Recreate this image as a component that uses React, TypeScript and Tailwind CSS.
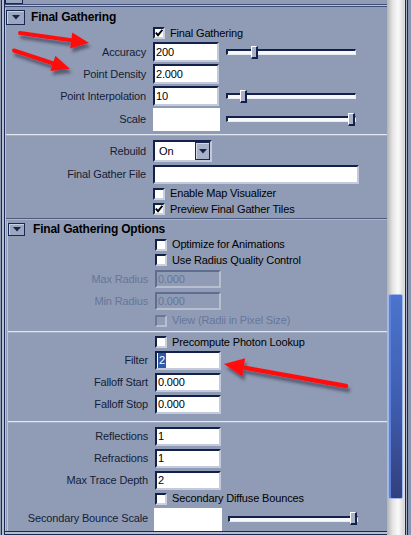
import type { ReactNode } from 'react'

const labelCls = 'text-right text-[11px] text-[#141c36] leading-none whitespace-nowrap'
const dimLabelCls = 'text-right text-[11px] text-[#66769a] leading-none whitespace-nowrap'

function HeadBtn({ small }: { small?: boolean }) {
  return (
    <div
      className={
        small
          ? 'w-[17px] h-[13px] box-border border border-[#1a2752] bg-[#9ba7bf] shadow-[inset_1px_1px_0_#c9d0de] flex items-center justify-center'
          : 'w-[19px] h-[15px] box-border border border-[#1a2752] bg-[#9ba7bf] shadow-[inset_1px_1px_0_#c9d0de] flex items-center justify-center'
      }
    >
      <svg width="8" height="5" viewBox="0 0 8 5">
        <path d="M0 0 H8 L4 4.5 Z" fill="#16224a" />
      </svg>
    </div>
  )
}

function Check({ on, disabled }: { on?: boolean; disabled?: boolean }) {
  return (
    <div
      className={
        disabled
          ? 'w-[12px] h-[12px] shrink-0 box-border border-2 border-t-[#6b7898] border-l-[#6b7898] border-r-[#b7bfce] border-b-[#b7bfce] bg-[#909cb5]'
          : 'w-[12px] h-[12px] shrink-0 box-border border-2 border-t-[#13214a] border-l-[#13214a] border-r-[#c9d0de] border-b-[#c9d0de] bg-white flex items-center justify-center'
      }
    >
      {on && (
        <svg width="8" height="8" viewBox="0 0 8 8">
          <path d="M0.8 3.6 L3 6.2 L7.4 0.8" fill="none" stroke="#000" strokeWidth="1.9" />
        </svg>
      )}
    </div>
  )
}

function CheckRow({ label, on, disabled, h, pl }: { label: string; on?: boolean; disabled?: boolean; h: string; pl: string }) {
  return (
    <div className={`${h} ${pl} flex items-center gap-[5px]`}>
      <Check on={on} disabled={disabled} />
      <span className={disabled ? 'text-[11px] leading-none text-[#66769a]' : 'text-[11px] leading-none text-black'}>{label}</span>
    </div>
  )
}

function Field({ children, disabled, tall }: { children?: ReactNode; disabled?: boolean; tall?: boolean }) {
  if (disabled)
    return (
      <div className="w-[66px] h-[18px] box-border border-2 border-t-[#5f6d90] border-l-[#5f6d90] border-r-[#b7bfce] border-b-[#b7bfce] bg-[#909cb5] flex items-center pl-[1px] text-[11px] text-[#66769a] leading-none">
        {children}
      </div>
    )
  return (
    <div
      className={
        tall
          ? 'w-[66px] h-[20px] box-border border-2 border-t-[#13214a] border-l-[#13214a] border-r-[#c3cadb] border-b-[#c3cadb] bg-white flex items-center pl-[1px] text-[11px] text-black leading-none'
          : 'w-[66px] h-[19px] box-border border-2 border-t-[#13214a] border-l-[#13214a] border-r-[#c3cadb] border-b-[#c3cadb] bg-white flex items-center pl-[1px] text-[11px] text-black leading-none'
      }
    >
      {children}
    </div>
  )
}

function Slider({ at }: { at: number }) {
  return (
    <div className="relative w-[130px] h-[13px] flex items-center">
      <div className="w-full h-[6px] box-border border-t-2 border-l-2 border-t-[#13214a] border-l-[#13214a] border-b border-r border-b-[#e8ecf3] border-r-[#e8ecf3] bg-[#f7f8fb]" />
      <div
        className="absolute top-0 w-[7px] h-[13px] box-border border border-t-white border-l-white border-r-2 border-b-2 border-r-[#13214a] border-b-[#13214a] bg-[#a9b3c8]"
        style={{ left: at }}
      />
    </div>
  )
}

function Row1({ label, value, slider }: { label: string; value: string; slider?: number }) {
  return (
    <div className="h-[22px] flex items-center">
      <div className={`w-[140px] ${labelCls}`}>{label}</div>
      <div className="ml-[7px]">
        <Field tall>{value}</Field>
      </div>
      {slider !== undefined && (
        <div className="ml-[7px]">
          <Slider at={slider} />
        </div>
      )}
    </div>
  )
}

function Row2({ label, children, disabled }: { label: string; children?: ReactNode; disabled?: boolean }) {
  return (
    <div className="h-[22px] flex items-center">
      <div className={`w-[140px] ${disabled ? dimLabelCls : labelCls}`}>{label}</div>
      <div className="ml-[7px]">
        <Field disabled={disabled}>{children}</Field>
      </div>
    </div>
  )
}

function LightSep({ h }: { h: string }) {
  return (
    <div className={`${h} flex flex-col justify-center`}>
      <div className="h-[1px] bg-[#e2e6ee]" />
      <div className="h-[1px] bg-[#a4aec3]" />
    </div>
  )
}

export default function App() {
  return (
    <div className="relative w-[411px] h-[535px] overflow-hidden bg-[#909cb5] flex font-['Liberation_Sans',Arial,sans-serif] tracking-[-0.15px]">
      {/* attribute panel */}
      <div className="w-[387px] h-full flex flex-col shadow-[inset_1px_0_0_#909cb5,inset_2px_0_0_#1b2955,inset_4px_0_0_#b6bece,inset_5px_0_0_#1b2955,inset_0_-1px_0_#1b2955,inset_0_-3px_0_#b6bece,inset_0_-4px_0_#1b2955]">
        {/* tail of previous section */}
        <div className="h-[8px] flex flex-col">
          <div className="h-[4px] flex">
            <div className="ml-[5px] w-[18px] h-[4px] box-border border-x border-b border-[#1a2752] bg-[#9ba7bf]" />
            <div className="flex-1" />
          </div>
          <div className="ml-[5px] h-[1px] bg-[#3f4e78]" />
          <div className="ml-[5px] h-[1px] bg-[#b9c1d1]" />
          <div className="ml-[5px] h-[1px] bg-[#3f4e78]" />
        </div>

        {/* Final Gathering */}
        <div className="ml-[5px] border-l border-l-[#bcc4d3] flex flex-col">
          <div className="h-[18px] flex items-center">
            <HeadBtn />
            <span className="ml-[6px] text-[12px] font-bold text-black leading-none tracking-[-0.2px]">Final Gathering</span>
          </div>
          <CheckRow h="h-[14px]" pl="pl-[147px]" on label="Final Gathering" />
          <div className="h-[1px]" />
          <Row1 label="Accuracy" value="200" slider={25} />
          <Row1 label="Point Density" value="2.000" />
          <Row1 label="Point Interpolation" value="10" slider={14} />
          <div className="h-[24px] flex items-center">
            <div className={`w-[140px] ${labelCls}`}>Scale</div>
            <div className="ml-[7px] w-[67px] h-[23px] bg-white" />
            <div className="ml-[6px]">
              <Slider at={122} />
            </div>
          </div>
          <LightSep h="h-[8px]" />

          <div className="h-[24px] flex items-center">
            <div className={`w-[140px] ${labelCls}`}>Rebuild</div>
            <div className="ml-[7px] w-[59px] h-[22px] box-border border-2 border-t-[#13214a] border-l-[#13214a] border-r-[#c3cadb] border-b-[#c3cadb] bg-white flex items-center">
              <span className="flex-1 pl-[4px] text-[11px] text-black leading-none">On</span>
              <div className="w-[15px] h-[18px] box-border border border-[#1a2752] bg-[#a7b1c7] shadow-[inset_1px_1px_0_#d3d9e5] flex items-center justify-center">
                <svg width="8" height="5" viewBox="0 0 8 5">
                  <path d="M0 0 H8 L4 4.5 Z" fill="#16224a" />
                </svg>
              </div>
            </div>
          </div>
          <div className="h-[23px] flex items-center">
            <div className={`w-[140px] ${labelCls}`}>Final Gather File</div>
            <div className="ml-[7px] w-[206px] h-[19px] box-border border-2 border-t-[#13214a] border-l-[#13214a] border-r-[#c3cadb] border-b-[#c3cadb] bg-white" />
          </div>
          <CheckRow h="h-[15px]" pl="pl-[147px]" label="Enable Map Visualizer" />
          <CheckRow h="h-[16px]" pl="pl-[147px]" on label="Preview Final Gather Tiles" />
          <div className="h-[4px] flex flex-col">
            <div className="h-[1px]" />
            <div className="h-[1px] bg-[#4c5b80]" />
            <div className="h-[1px] bg-[#aeb7c9]" />
          </div>

          {/* Final Gathering Options */}
          <div className="ml-[1px] border-l border-l-[#bcc4d3] flex flex-col">
            <div className="h-[16px] flex items-center">
              <HeadBtn small />
              <span className="ml-[8px] text-[12px] font-bold text-black leading-none tracking-[-0.2px]">Final Gathering Options</span>
            </div>
            <CheckRow h="h-[15px]" pl="pl-[147px]" label="Optimize for Animations" />
            <CheckRow h="h-[16px]" pl="pl-[147px]" label="Use Radius Quality Control" />
            <Row2 label="Max Radius" disabled>0.000</Row2>
            <Row2 label="Min Radius" disabled>0.000</Row2>
            <CheckRow h="h-[17px]" pl="pl-[147px]" disabled label="View (Radii in Pixel Size)" />
            <LightSep h="h-[6px]" />
            <CheckRow h="h-[14px]" pl="pl-[147px]" label="Precompute Photon Lookup" />
            <Row2 label="Filter">
              <span className="bg-[#2c5aa8] text-white px-[1px] py-[2px]">2</span>
            </Row2>
            <Row2 label="Falloff Start">0.000</Row2>
            <Row2 label="Falloff Stop">0.000</Row2>
            <div className="h-[10px] flex flex-col justify-end pb-[2px]">
              <div className="h-[1px] bg-[#e2e6ee]" />
              <div className="h-[1px] bg-[#a4aec3]" />
            </div>
            <Row2 label="Reflections">1</Row2>
            <Row2 label="Refractions">1</Row2>
            <Row2 label="Max Trace Depth">2</Row2>
            <CheckRow h="h-[15px]" pl="pl-[147px]" label="Secondary Diffuse Bounces" />
            <div className="h-[25px] flex items-center">
              <div className={`w-[140px] ${labelCls}`}>Secondary Bounce Scale</div>
              <div className="ml-[6px] w-[68px] h-[23px] bg-white self-end" />
              <div className="ml-[6px]">
                <Slider at={122} />
              </div>
            </div>
          </div>
        </div>
      </div>

      {/* scrollbar */}
      <div className="w-[16px] h-full flex flex-col bg-[linear-gradient(to_right,#b3b3b3,#e4e4e4_35%,#fbfbfb_70%,#dcdcdc)]">
        <div className="h-[294px]" />
        <div className="ml-[1px] h-[205px] box-border border border-[#9fb6ea] rounded-[2px] bg-[linear-gradient(to_bottom,#4c74cd,#3e5cae_55%,#333f7c)] shadow-[inset_2px_0_0_#5a82da]" />
        <div className="flex-1" />
      </div>

      {/* window edge */}
      <div className="w-[8px] h-full flex">
        <div className="w-[2px] bg-[#dcdcdc]" />
        <div className="w-[1px] bg-[#1a2a5a]" />
        <div className="w-[1px] bg-[#a4aec4]" />
        <div className="w-[1px] bg-[#1a2a5a]" />
        <div className="flex-1 bg-[#8794b0]" />
      </div>

      {/* red annotation arrows */}
      <svg className="absolute left-0 top-0 pointer-events-none" width="411" height="535" viewBox="0 0 411 535">
        <defs>
          <filter id="arrowShadow" x="-30%" y="-80%" width="160%" height="260%">
            <feDropShadow dx="2" dy="4" stdDeviation="1.6" floodColor="#262c40" floodOpacity="0.55" />
          </filter>
        </defs>
        <g filter="url(#arrowShadow)" fill="#ff1111" stroke="#ff1111" strokeLinecap="round">
          <line x1="20" y1="33" x2="73" y2="40.6" strokeWidth="4" />
          <polygon points="89,43 70.1,48.4 72.3,32.6" stroke="none" />
          <line x1="14" y1="50.5" x2="55" y2="64" strokeWidth="4" />
          <polygon points="70,69 50.4,70.9 55.4,55.7" stroke="none" />
          <line x1="346" y1="386" x2="243" y2="367.4" strokeWidth="4.5" />
          <polygon points="224,364 245.2,358.3 242.2,376.5" stroke="none" />
        </g>
      </svg>
    </div>
  )
}
